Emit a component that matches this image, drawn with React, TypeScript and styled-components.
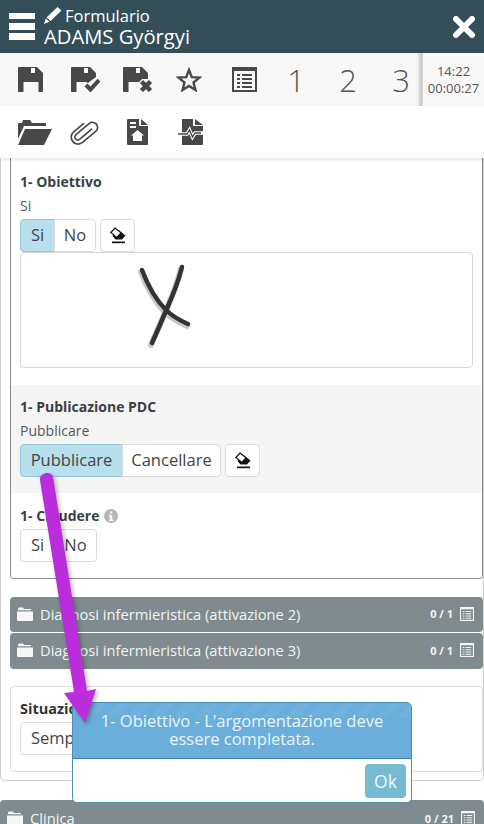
import React from 'react';
import styled, { createGlobalStyle } from 'styled-components';

const GlobalStyle = createGlobalStyle`
  html, body {
    margin: 0;
    padding: 0;
    background: #fff;
    font-family: "Open Sans", "Liberation Sans", sans-serif;
    color: #333;
  }
  * { box-sizing: border-box; }
`;

const Page = styled.div`
  position: relative;
  width: 484px;
  height: 824px;
  overflow: hidden;
  background: #fff;
`;

const Header = styled.header`
  height: 53px;
  background: #344e58;
  color: #fff;
  display: flex;
  align-items: center;
  padding: 0 9px 0 9px;
`;

const TitleBlock = styled.div`
  margin-left: 9px;
  display: flex;
  flex-direction: column;
  margin-top: 1px;
`;

const TitleTop = styled.div`
  display: flex;
  align-items: center;
  gap: 3px;
  font-size: 16.5px;
  line-height: 19px;
`;

const TitleName = styled.div`
  font-size: 20.2px;
  line-height: 23px;
`;

const CloseIcon = styled.svg`
  margin-left: auto;
  display: block;
`;

const MainBar = styled.div`
  height: 53px;
  background: #f8f8f8;
  display: flex;
`;

const MainIcons = styled.div`
  width: 423px;
  flex: none;
  display: flex;
  align-items: center;
  padding-left: 18px;
  box-shadow: inset -4px 0 3px -1px #c9c9c9;
  border-right: 1px solid #d4d4d4;
`;

const ToolSlot = styled.div<{ $w: number }>`
  width: ${p => p.$w}px;
  flex: none;
  display: flex;
  align-items: center;
  color: #484848;
`;

const NumberTool = styled(ToolSlot)`
  justify-content: center;
  font-size: 31px;
  font-weight: 300;
  color: #555;
`;

const Clock = styled.div`
  flex: 1;
  text-align: center;
  font-size: 13px;
  line-height: 17px;
  color: #555;
  padding-top: 10px;
`;

const SubBar = styled.div`
  height: 52px;
  display: flex;
  align-items: center;
  padding-left: 18px;
  background: #fff;
  box-shadow: 0 2px 3px rgba(0, 0, 0, 0.1);
  position: relative;
  z-index: 2;
`;

const Content = styled.div`
  border-left: 1px solid #cfcfcf;
  border-right: 1px solid #cfcfcf;
  border-bottom: 1px solid #cfcfcf;
  border-radius: 0 0 5px 5px;
  height: 623px;
  padding: 0 0 0 9px;
`;

const FormPanel = styled.div`
  width: 473px;
  height: 421px;
  border: 1px solid #8a8a8a;
  border-top: none;
  border-radius: 0 0 4px 4px;
  margin-bottom: 18px;
  overflow: hidden;
`;

const Section = styled.div<{ $h: number; $top: number; $shade?: boolean }>`
  height: ${p => p.$h}px;
  padding: ${p => p.$top}px 9px 0;
  background: ${p => (p.$shade ? '#f5f5f5' : '#fff')};
`;

const FieldTitle = styled.div`
  display: flex;
  align-items: center;
  gap: 4px;
  font-size: 14px;
  font-weight: 700;
  line-height: 17px;
  color: #3a3f45;
`;

const FieldValue = styled.div`
  font-size: 14px;
  line-height: 17px;
  margin-top: 7px;
  color: #555;
`;

const ButtonRow = styled.div<{ $top: number }>`
  display: flex;
  gap: 4px;
  margin-top: ${p => p.$top}px;
`;

const ButtonGroup = styled.div`
  display: flex;
`;

const ChoiceButton = styled.div<{ $active?: boolean; $w: number }>`
  width: ${p => p.$w}px;
  height: 33px;
  padding-bottom: 2px;
  display: flex;
  align-items: center;
  justify-content: center;
  font-size: 16.5px;
  color: #444;
  border: 1px solid ${p => (p.$active ? '#8fc4da' : '#dcdcdc')};
  background: ${p => (p.$active ? '#b8dfec' : '#fff')};
  margin-left: -1px;
  &:first-child {
    margin-left: 0;
    border-radius: 4px 0 0 4px;
  }
  &:last-child {
    border-radius: 0 4px 4px 0;
  }
`;

const EraseButton = styled.div`
  width: 35px;
  height: 33px;
  display: flex;
  align-items: center;
  justify-content: center;
  background: #fff;
  border: 1px solid #dcdcdc;
  border-radius: 4px;
`;

const Scribble = styled.div`
  position: relative;
  height: 116px;
  border: 1px solid #d6d6d6;
  border-radius: 4px;
  background: #fff;
`;

const ScribbleInk = styled.svg`
  position: absolute;
  left: 0;
  top: 0;
`;

const Accordion = styled.div<{ $w: number; $h: number }>`
  width: ${p => p.$w}px;
  height: ${p => p.$h}px;
  background: #7f8b8e;
  border-radius: 4px;
  display: flex;
  align-items: center;
  padding: 0 9px 2px 7px;
  color: #f2f4f4;
  font-size: 14.7px;
  margin-bottom: 1px;
`;

const AccordionLabel = styled.span`
  margin-left: 7px;
`;

const Count = styled.span`
  margin-left: auto;
  font-size: 11px;
  font-weight: 700;
  margin-right: 7px;
`;

const SituationCard = styled.div`
  width: 473px;
  height: 86px;
  margin-top: 17px;
  border: 1px solid #dcdcdc;
  border-radius: 4px;
  padding: 13px 9px 0;
`;

const SituationLabel = styled.div`
  width: 166px;
  display: flex;
  align-items: center;
  justify-content: space-between;
  font-size: 14.5px;
  font-weight: 700;
  line-height: 18px;
  color: #333;
`;

const SelectBox = styled.div`
  height: 33px;
  width: 300px;
  margin-top: 4px;
  border: 1px solid #dcdcdc;
  border-radius: 4px;
  padding: 0 10px;
  font-size: 16.5px;
  line-height: 29px;
  color: #444;
`;

const BottomAccordion = styled(Accordion)`
  margin-top: 19px;
  padding-top: 2px;
  padding-bottom: 0;
  border-radius: 4px 4px 0 0;
`;

const Dialog = styled.div`
  position: absolute;
  left: 72px;
  top: 702px;
  width: 340px;
  height: 101px;
  border: 1px solid #4b8fb5;
  border-radius: 5px;
  background: #fff;
  overflow: hidden;
`;

const DialogHeader = styled.div`
  height: 56px;
  background-color: #6aafdc;
  background-image: repeating-linear-gradient(
    135deg,
    rgba(255, 255, 255, 0.035) 0 8px,
    transparent 8px 16px
  );
  background-size: 100% 14px;
  background-repeat: no-repeat;
  border-bottom: 1px solid #3d7da8;
  color: #eaf4fb;
  font-size: 16.5px;
  line-height: 18px;
  text-align: center;
  padding: 9px 14px 0;
`;

const DialogFooter = styled.div`
  display: flex;
  justify-content: flex-end;
  padding: 5px 5px 0;
`;

const OkButton = styled.div`
  width: 41px;
  height: 34px;
  background: #75bbd2;
  border-radius: 4px;
  color: #eef8fb;
  font-size: 17.5px;
  display: flex;
  align-items: center;
  justify-content: center;
`;

const ArrowOverlay = styled.svg`
  position: absolute;
  left: 0;
  top: 0;
  pointer-events: none;
  filter: drop-shadow(2px 2px 2px rgba(0, 0, 0, 0.3));
`;

const Disk = () => (
  <svg width="25" height="25" viewBox="0 0 25 25">
    <path
      fill="currentColor"
      fillRule="evenodd"
      d="M1 0h18l6 6v18a1 1 0 0 1-1 1h-3.500v-10H5.500v10H1a1 1 0 0 1-1-1V1a1 1 0 0 1 1-1zM13 1v5h4V1z"
    />
  </svg>
);

const DiskCheck = () => (
  <svg width="29" height="25" viewBox="0 0 29 25">
    <path
      fill="currentColor"
      fillRule="evenodd"
      d="M1 0h18l6 6v4l-8 6-2-1H5.500v10H1a1 1 0 0 1-1-1V1a1 1 0 0 1 1-1zM13 1v5h4V1z"
    />
    <path fill="none" stroke="currentColor" strokeWidth="4" d="M15 18l4.500 4.500L28 13" />
  </svg>
);

const DiskCross = () => (
  <svg width="30" height="25" viewBox="0 0 30 25">
    <path
      fill="currentColor"
      fillRule="evenodd"
      d="M1 0h18l6 6v6h-6l-3 3H5.500v10H1a1 1 0 0 1-1-1V1a1 1 0 0 1 1-1zM13 1v5h4V1z"
    />
    <path fill="none" stroke="currentColor" strokeWidth="4.500" d="M18.500 14.500l9 9M27.500 14.500l-9 9" />
  </svg>
);

const StarOutline = () => (
  <svg width="26" height="25" viewBox="0 0 26 25">
    <path
      fill="none"
      stroke="currentColor"
      strokeWidth="2.400"
      strokeLinejoin="miter"
      d="M13 3l2.800 7.200 7.700.4-6 4.900 2 7.500L13 19l-6.500 4 2-7.500-6-4.900 7.700-.4z"
    />
  </svg>
);

const ListAlt = ({ $size }: { $size: number }) => (
  <svg width={$size} height={$size} viewBox="0 0 25 25">
    <rect x="1" y="1" width="23" height="23" fill="none" stroke="currentColor" strokeWidth="2" />
    <path
      fill="currentColor"
      d="M0 0h25v4H0zM5 7h3v2H5zM10 7h10v2H10zM5 11h3v2H5zM10 11h10v2H10zM5 15h3v2H5zM10 15h10v2H10zM5 19h3v2H5zM10 19h10v2H10z"
    />
  </svg>
);

const RowIcon = styled.span`
  display: flex;
  color: #f4f6f6;
`;

const FolderOpen = () => (
  <svg width="34" height="25" viewBox="0 0 34 25">
    <path fill="currentColor" d="M0 4q0-1 1-1h3l1-3h7l2 3h14v3H6L0 19z" />
    <path fill="currentColor" d="M7 9h27l-8 16H0z" />
  </svg>
);

const Clip = () => (
  <svg width="30" height="26" viewBox="-15 -13 30 26">
    <g transform="rotate(50) scale(0.86) translate(0 1)">
      <path
        fill="none"
        stroke="currentColor"
        strokeWidth="1.900"
        strokeLinecap="round"
        d="M2.500 -9V9a3.500 3.500 0 0 1-7 0V-11a6 6 0 0 1 12 0V9a8 8 0 0 1-16 0V-6"
      />
    </g>
  </svg>
);

const FileHome = () => (
  <svg width="21" height="26" viewBox="0 0 21 26">
    <path
      fill="currentColor"
      fillRule="evenodd"
      d="M1 0h11v7h9v18a1 1 0 0 1-1 1H1a1 1 0 0 1-1-1V1a1 1 0 0 1 1-1zM3 3v2h6V3zM3 7v2h6V7zM10.500 11L4 16.500h2V22h9v-5.500h2z"
    />
    <path fill="currentColor" d="M14 0l7 6h-7z" />
  </svg>
);

const FilePulse = () => (
  <svg width="25" height="26" viewBox="0 0 25 26">
    <path fill="currentColor" d="M4 0h11v7h10v18a1 1 0 0 1-1 1H4z" />
    <path fill="currentColor" d="M17 0l8 6h-8z" />
    <path fill="none" stroke="#fff" strokeWidth="3.500" d="M0 15h9l2.500-4 3 7 2.500-4h8" />
    <path fill="none" stroke="#484848" strokeWidth="1.300" d="M0 15h9l2.500-4 3 7 2.500-4h6" />
  </svg>
);

const Eraser = () => (
  <svg width="18" height="18" viewBox="0 0 18 18">
    <path fill="#111" d="M9.500 3l7 5.500-3.500 4H6.500L3.500 9z" />
    <path fill="#fff" stroke="#111" strokeWidth="1.200" d="M6 1l6 4.800-4.200 4.700-6-5z" />
    <rect x="3" y="14.500" width="13" height="1.700" fill="#111" />
  </svg>
);

const InfoDot = () => (
  <svg width="14" height="14" viewBox="0 0 14 14">
    <circle cx="7" cy="7" r="7" fill="#b5b5b5" />
    <path fill="#fff" d="M6 2.500h2.200v2H6zM5 6h3.200v4.500H9.300V12H5v-1.500h1.100V7.500H5z" />
  </svg>
);

const FolderClosed = () => (
  <svg width="16" height="14" viewBox="0 0 16 14">
    <path fill="#f6f7f7" d="M2 0.500h4l1 1.500h7v1.200H1V1.500zM0 4.500h16V13a1 1 0 0 1-1 1H1a1 1 0 0 1-1-1z" />
  </svg>
);

const App = () => (
  <Page>
    <GlobalStyle />
    <Header>
      <svg width="26" height="27" viewBox="0 0 26 27">
        <path fill="#fff" d="M0 0h26v6H0zM0 10h26v7H0zM0 20h26v7H0z" />
      </svg>
      <TitleBlock>
        <TitleTop>
          <svg width="18" height="17" viewBox="0 0 18 17">
            <path fill="#fff" d="M13.500 0l4 3.500L6.500 14 2.500 10.500zM1.800 11.500l3.700 3.200L0 17z" />
          </svg>
          Formulario
        </TitleTop>
        <TitleName>ADAMS Györgyi</TitleName>
      </TitleBlock>
      <CloseIcon width="22" height="22" viewBox="0 0 22 22">
        <path fill="none" stroke="#fff" strokeWidth="6" strokeLinecap="round" d="M3 3l16 16M19 3L3 19" />
      </CloseIcon>
    </Header>
    <MainBar>
      <MainIcons>
        <ToolSlot $w={53}><Disk /></ToolSlot>
        <ToolSlot $w={52}><DiskCheck /></ToolSlot>
        <ToolSlot $w={53}><DiskCross /></ToolSlot>
        <ToolSlot $w={56}><StarOutline /></ToolSlot>
        <ToolSlot $w={38}><ListAlt $size={25} /></ToolSlot>
        <NumberTool $w={52}>1</NumberTool>
        <NumberTool $w={52}>2</NumberTool>
        <NumberTool $w={54}>3</NumberTool>
      </MainIcons>
      <Clock>14:22<br />00:00:27</Clock>
    </MainBar>
    <SubBar>
      <ToolSlot $w={52}><FolderOpen /></ToolSlot>
      <ToolSlot $w={57}><Clip /></ToolSlot>
      <ToolSlot $w={51}><FileHome /></ToolSlot>
      <ToolSlot $w={52}><FilePulse /></ToolSlot>
    </SubBar>
    <Content>
      <FormPanel>
        <Section $h={227} $top={15}>
          <FieldTitle>1- Obiettivo</FieldTitle>
          <FieldValue>Si</FieldValue>
          <ButtonRow $top={5}>
            <ButtonGroup>
              <ChoiceButton $active $w={35}>Si</ChoiceButton>
              <ChoiceButton $w={42}>No</ChoiceButton>
            </ButtonGroup>
            <EraseButton><Eraser /></EraseButton>
          </ButtonRow>
          <Scribble>
            <ScribbleInk width="452" height="114" viewBox="0 0 452 114">
              <path
                d="M121 17c6 16 14 30 24 40 6 6 13 10 22 14M161 14c-5 20-11 32-17 46-5 12-9 21-13 30"
                fill="none"
                stroke="rgba(0,0,0,0.22)"
                strokeWidth="6"
                strokeLinecap="round"
                transform="translate(-1 2)"
              />
              <path
                d="M121 17c6 16 14 30 24 40 6 6 13 10 22 14M161 14c-5 20-11 32-17 46-5 12-9 21-13 30"
                fill="none"
                stroke="#333"
                strokeWidth="4.500"
                strokeLinecap="round"
              />
            </ScribbleInk>
          </Scribble>
        </Section>
        <Section $h={108} $top={13} $shade>
          <FieldTitle>1- Publicazione PDC</FieldTitle>
          <FieldValue>Pubblicare</FieldValue>
          <ButtonRow $top={5}>
            <ButtonGroup>
              <ChoiceButton $active $w={103}>Pubblicare</ChoiceButton>
              <ChoiceButton $w={99}>Cancellare</ChoiceButton>
            </ButtonGroup>
            <EraseButton><Eraser /></EraseButton>
          </ButtonRow>
        </Section>
        <Section $h={85} $top={14}>
          <FieldTitle>1- Chiudere <InfoDot /></FieldTitle>
          <ButtonRow $top={5}>
            <ButtonGroup>
              <ChoiceButton $w={35}>Si</ChoiceButton>
              <ChoiceButton $w={43}>No</ChoiceButton>
            </ButtonGroup>
          </ButtonRow>
        </Section>
      </FormPanel>
      <Accordion $w={473} $h={35}>
        <FolderClosed />
        <AccordionLabel>Diagnosi infermieristica (attivazione 2)</AccordionLabel>
        <Count>0 / 1</Count>
        <RowIcon><ListAlt $size={14} /></RowIcon>
      </Accordion>
      <Accordion $w={473} $h={36}>
        <FolderClosed />
        <AccordionLabel>Diagnosi infermieristica (attivazione 3)</AccordionLabel>
        <Count>0 / 1</Count>
        <RowIcon><ListAlt $size={14} /></RowIcon>
      </Accordion>
      <SituationCard>
        <SituationLabel>Situazione <InfoDot /></SituationLabel>
        <SelectBox>Sempre</SelectBox>
      </SituationCard>
    </Content>
    <BottomAccordion $w={484} $h={34}>
      <FolderClosed />
      <AccordionLabel>Clinica</AccordionLabel>
      <Count>0 / 21</Count>
      <RowIcon><ListAlt $size={14} /></RowIcon>
    </BottomAccordion>
    <Dialog>
      <DialogHeader>1- Obiettivo - L'argomentazione deve essere completata.</DialogHeader>
      <DialogFooter><OkButton>Ok</OkButton></DialogFooter>
    </Dialog>
    <ArrowOverlay width="484" height="824" viewBox="0 0 484 824">
      <path fill="#bb2ddb" d="M40 480c-1-7 11-10 13-3l34 214 9-2-11 34-21-30 10-1z" />
    </ArrowOverlay>
  </Page>
);

export default App;
